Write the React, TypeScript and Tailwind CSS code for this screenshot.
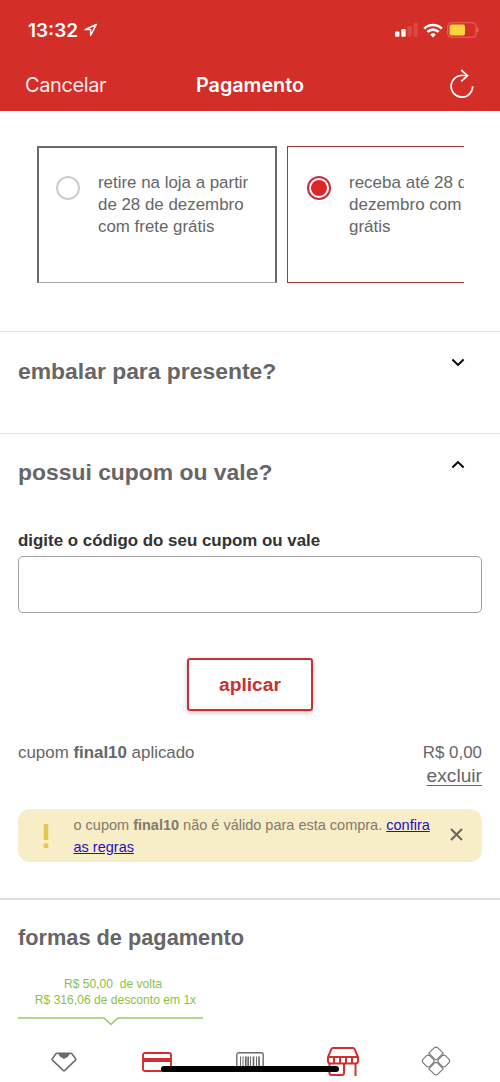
import React, { useState } from 'react';

const StatusBar: React.FC = () => (
    <div className="flex h-[60px] items-center justify-between pl-[28px] pr-[20px]">
        <div className="flex items-center gap-1">
            <span className="font-['Inter',sans-serif] text-[19px] font-semibold leading-6 w-[52px] whitespace-nowrap pt-px">13:32</span>
            <svg width="14" height="14" viewBox="0 0 14 14" fill="none" stroke="currentColor" strokeWidth="1.5" strokeLinejoin="round">
                <path d="M12.3 1.5 1 6.6h5.6v5.9z" />
            </svg>
        </div>
        <div className="flex items-center">
            <svg width="23" height="14" viewBox="0 0 23 14" fill="currentColor">
                <rect x="0" y="8.5" width="4.4" height="5.2" rx="1" />
                <rect x="6.3" y="6" width="4.4" height="7.7" rx="1" />
                <rect x="12.4" y="3" width="4.4" height="10.7" rx="1" opacity=".13" />
                <rect x="18.4" y="0" width="4.4" height="13.7" rx="1" opacity=".13" />
            </svg>
            <svg className="ml-[5px]" width="20" height="15" viewBox="0 0 20 15" fill="none" stroke="currentColor" strokeWidth="2.7">
                <path d="M1.2 5.6a12.6 12.6 0 0 1 17.6 0" />
                <path d="M4.4 8.9a8 8 0 0 1 11.2 0" />
                <path d="M7.2 11.5a4 4 0 0 1 5.6 0L10 14.4z" fill="currentColor" stroke="none" />
            </svg>
            <svg className="ml-[4px] mr-px" width="32" height="16" viewBox="0 0 32 16" fill="none">
                <rect x=".7" y=".7" width="28.4" height="14.6" rx="4" stroke="#e4695f" strokeWidth="1.1" />
                <rect x="2.5" y="2.6" width="15.5" height="10.8" rx="2" fill="#fbd43b" />
                <path d="M30.4 5.8c1.6.6 1.6 3.8 0 4.4z" fill="#e98379" />
            </svg>
        </div>
    </div>
);

const Radio: React.FC<{ checked?: boolean }> = ({ checked }) => (
    <span
        className={`flex h-6 w-6 shrink-0 items-center justify-center rounded-full border-[2px] ${checked ? 'border-[#cf2c3b]' : 'border-[#cdcdcd]'}`}
    >
        {checked && <span className="h-4 w-4 rounded-full bg-[#dd2727]" />}
    </span>
);

const Chevron: React.FC<{ up?: boolean }> = ({ up }) => (
    <svg className={up ? 'rotate-180' : ''} width="14" height="9" viewBox="0 0 14 9" fill="none" stroke="#000" strokeWidth="2">
        <path d="M1.4 1.6 7 6.9l5.6-5.3" />
    </svg>
);

const TabBar: React.FC = () => (
    <nav className="relative flex h-[38px] items-start pl-[17px]">
        <div className="flex w-[93px] justify-center pt-[8px]">
            <svg width="26" height="20" viewBox="0 0 26 20" fill="none" stroke="#6b6b6b" strokeWidth="1.5" strokeLinejoin="round">
                <path d="M6.2 1.2h13.4q.8 0 1.3.6l3.7 5q.5.7-.1 1.3L13.8 18.4q-.8.7-1.6 0L1.4 8.1q-.6-.6-.1-1.3l3.6-5q.5-.6 1.3-.6z" />
                <path d="M7 1.4h12l-1.8 3L13 6.9 8.8 4.4z" fill="#6b6b6b" stroke="none" />
            </svg>
        </div>
        <div className="flex w-[93px] justify-center pt-[8px]">
            <svg width="30" height="20" viewBox="0 0 30 20" fill="none" stroke="#d32f2f" strokeWidth="1.9">
                <rect x="1" y="1" width="28" height="18" rx="2" />
                <path d="M1 8h28" strokeWidth="4" />
            </svg>
        </div>
        <div className="flex w-[93px] justify-center pt-[8px]">
            <svg width="28" height="20" viewBox="0 0 28 20" fill="none" stroke="#6b6b6b">
                <rect x=".8" y=".8" width="26.4" height="18.4" rx="2" strokeWidth="1.4" />
                <path d="M4.5 4.5v12M7 4.5v12M14.5 4.5v12M20.5 4.5v12" strokeWidth="1" />
                <path d="M9.8 4.5v12M12.2 4.5v12M17.5 4.5v12M23 4.5v12" strokeWidth="1.7" />
            </svg>
        </div>
        <div className="flex w-[93px] justify-center pt-[2px]">
            <svg width="34" height="32" viewBox="0 0 34 32" fill="none" stroke="#d32f2f" strokeWidth="2" strokeLinejoin="round">
                <path d="M7 2h20q1.2 0 1.6 1.2L32 11H2L5.4 3.2Q5.8 2 7 2z" />
                <path d="M2 11v4q0 2.5 3 2.5h24q3 0 3-2.5v-4M8 11v6M14 11v6M20 11v6M26 11v6" />
                <path d="M3.5 17v10q0 2 2 2H16q2 0 2-2V18M29.5 17v13" />
            </svg>
        </div>
        <div className="flex w-[93px] justify-center pt-[2px]">
            <svg width="30" height="30" viewBox="0 0 30 30" fill="none" stroke="#777" strokeWidth="1.15">
                <path d="M13.2 1.9q1.8-1.6 3.6 0l5.4 5.2-5.6 5.8q-1.6 1.6-3.2 0L7.8 7.1z" strokeLinejoin="round" />
                <path d="M13.2 28.1q1.8 1.6 3.6 0l5.4-5.2-5.6-5.8q-1.6-1.6-3.2 0l-5.6 5.8z" strokeLinejoin="round" />
                <rect x="2.3" y="10.1" width="9.8" height="9.8" rx="3" transform="rotate(45 7.2 15)" />
                <rect x="17.9" y="10.1" width="9.8" height="9.8" rx="3" transform="rotate(45 22.8 15)" />
            </svg>
        </div>
        {/* Home indicator */}
        <div className="absolute left-[161px] top-[22px] h-[6px] w-[178px] rounded-full bg-black" />
    </nav>
);

const App: React.FC = () => {
    const [coupon, setCoupon] = useState('');

    return (
        <div className="h-[1082px] w-[500px] overflow-hidden bg-white font-['Liberation_Sans',Arial,sans-serif] text-[#666]">
            <header className="h-[111px] bg-[#d42e28] font-['Inter',sans-serif] text-white">
                <StatusBar />
                <div className="grid h-[50px] grid-cols-[1fr_auto_1fr] items-center pl-[25px] pr-[25px]">
                    <span className="text-[20px] leading-6 tracking-[-0.4px] text-[#ffe9e7]">Cancelar</span>
                    <span className="text-[19.8px] font-semibold leading-6">Pagamento</span>
                    <svg className="mb-[3px] justify-self-end" width="26" height="30" viewBox="0 0 26 30" fill="none" stroke="currentColor" strokeWidth="1.7">
                        <path d="M23.7 17.3A10.8 10.8 0 1 1 13.8 6.5h4.6" />
                        <path d="M12.2 1l6.3 5.7-6.3 5.7" />
                    </svg>
                </div>
            </header>

            {/* Delivery options */}
            <section className="h-[220px] pl-[37px] pr-[36px] pt-[35px]">
                <div className="flex items-start gap-[10px] overflow-hidden text-[16.9px] leading-[22px]">
                    <label className="flex h-[137px] w-[240px] shrink-0 gap-[18px] border-2 border-b border-[#6a6a6a] border-b-[#aaa] pl-[17px] pt-[24px]">
                        <span className="pt-[4px]"><Radio /></span>
                        <span className="w-[160px]">retire na loja a partir<br />de 28 de dezembro<br />com frete grátis</span>
                    </label>
                    <label className="flex h-[137px] w-[240px] shrink-0 gap-[18px] border border-[#aa3437] pl-[19px] pt-[25px]">
                        <span className="pt-[4px]"><Radio checked /></span>
                        <span className="w-[160px] text-[17px]">receba até 28 de<br />dezembro com frete<br />grátis</span>
                    </label>
                </div>
            </section>

            <section className="flex h-[102px] justify-between border-t-[1.5px] border-[#e4e4e4] pl-[18px] pr-[35px] pt-[25px]">
                <h2 className="text-[22.9px] font-bold leading-7">embalar para presente?</h2>
                <span className="pt-px"><Chevron /></span>
            </section>

            {/* Coupon */}
            <section className="h-[465px] border-t-[1.5px] border-[#e4e4e4] px-[18px] pt-[24px]">
                <div className="flex h-[72px] justify-between pr-[17px]">
                    <h2 className="text-[22.9px] font-bold leading-7">possui cupom ou vale?</h2>
                    <span className="pt-[2px]"><Chevron up /></span>
                </div>
                <label htmlFor="coupon" className="block text-[16.9px] font-bold leading-[22px] text-[#333]">
                    digite o código do seu cupom ou vale
                </label>
                <input
                    id="coupon"
                    value={coupon}
                    onChange={(e) => setCoupon(e.target.value)}
                    className="mt-[4px] block h-[57px] w-full rounded-[5px] border border-[#a0a0a0] px-3 outline-none"
                />
                <button className="mx-auto mt-[45px] block h-[53px] w-[126px] rounded-[3px] border-2 border-[#c92e30] text-[19.2px] font-bold text-[#c92f2f] shadow-[0_2px_5px_rgba(0,0,0,0.22)]">
                    <span className="block pt-[2px]">aplicar</span>
                </button>
                <div className="mt-[31px] flex justify-between text-[16.9px] leading-[22px]">
                    <p>cupom <b>final10</b> aplicado</p>
                    <div className="text-right">
                        <p>R$ 0,00</p>
                        <a href="#" className="block text-[19.2px] leading-6 underline underline-offset-[3px] decoration-1">excluir</a>
                    </div>
                </div>
                <div className="mt-[21px] flex h-[53px] items-center rounded-[12px] bg-[#f7edc6] pr-[19px]">
                    <svg className="ml-[24px] mr-[23.5px] shrink-0" width="8" height="24" viewBox="0 0 8 24" fill="#e7c64d">
                        <path d="M1.8 0h4.4v16H1.8zM1.8 19.5h4.4V24H1.8z" />
                    </svg>
                    <p className="flex-1 whitespace-nowrap text-[14.5px] leading-[22px] text-[#807b6c]">
                        o cupom <b>final10</b> não é válido para esta compra.{' '}
                        <a href="#" className="text-[#2010c4] underline underline-offset-1">confira<br />as regras</a>
                    </p>
                    <svg className="mb-[2px]" width="13" height="13" viewBox="0 0 13 13" stroke="#666" strokeWidth="2">
                        <path d="M1 1l11 11M12 1 1 12" />
                    </svg>
                </div>
            </section>

            {/* Payment methods */}
            <section className="h-[146px] border-t-2 border-[#e0e0e0] px-[18px] pt-[24px]">
                <h2 className="text-[21.75px] font-bold leading-7">formas de pagamento</h2>
                <div className="mt-[24px] w-[185px]">
                    <p className="text-center text-[12.1px] leading-4 text-[#8ac249]">
                        <span className="pl-[5px]">R$ 50,00&nbsp; de volta</span>
                        <br />
                        <span className="whitespace-nowrap pl-[10px]">R$ 316,06 de desconto em 1x</span>
                    </p>
                    <svg className="mt-[9px]" width="185" height="9" viewBox="0 0 185 9" fill="none" stroke="#9cc868" strokeWidth="1.5">
                        <path d="M0 1h86l7 6.5L100 1h85" />
                    </svg>
                </div>
            </section>

            <TabBar />
        </div>
    );
};

export default App;
